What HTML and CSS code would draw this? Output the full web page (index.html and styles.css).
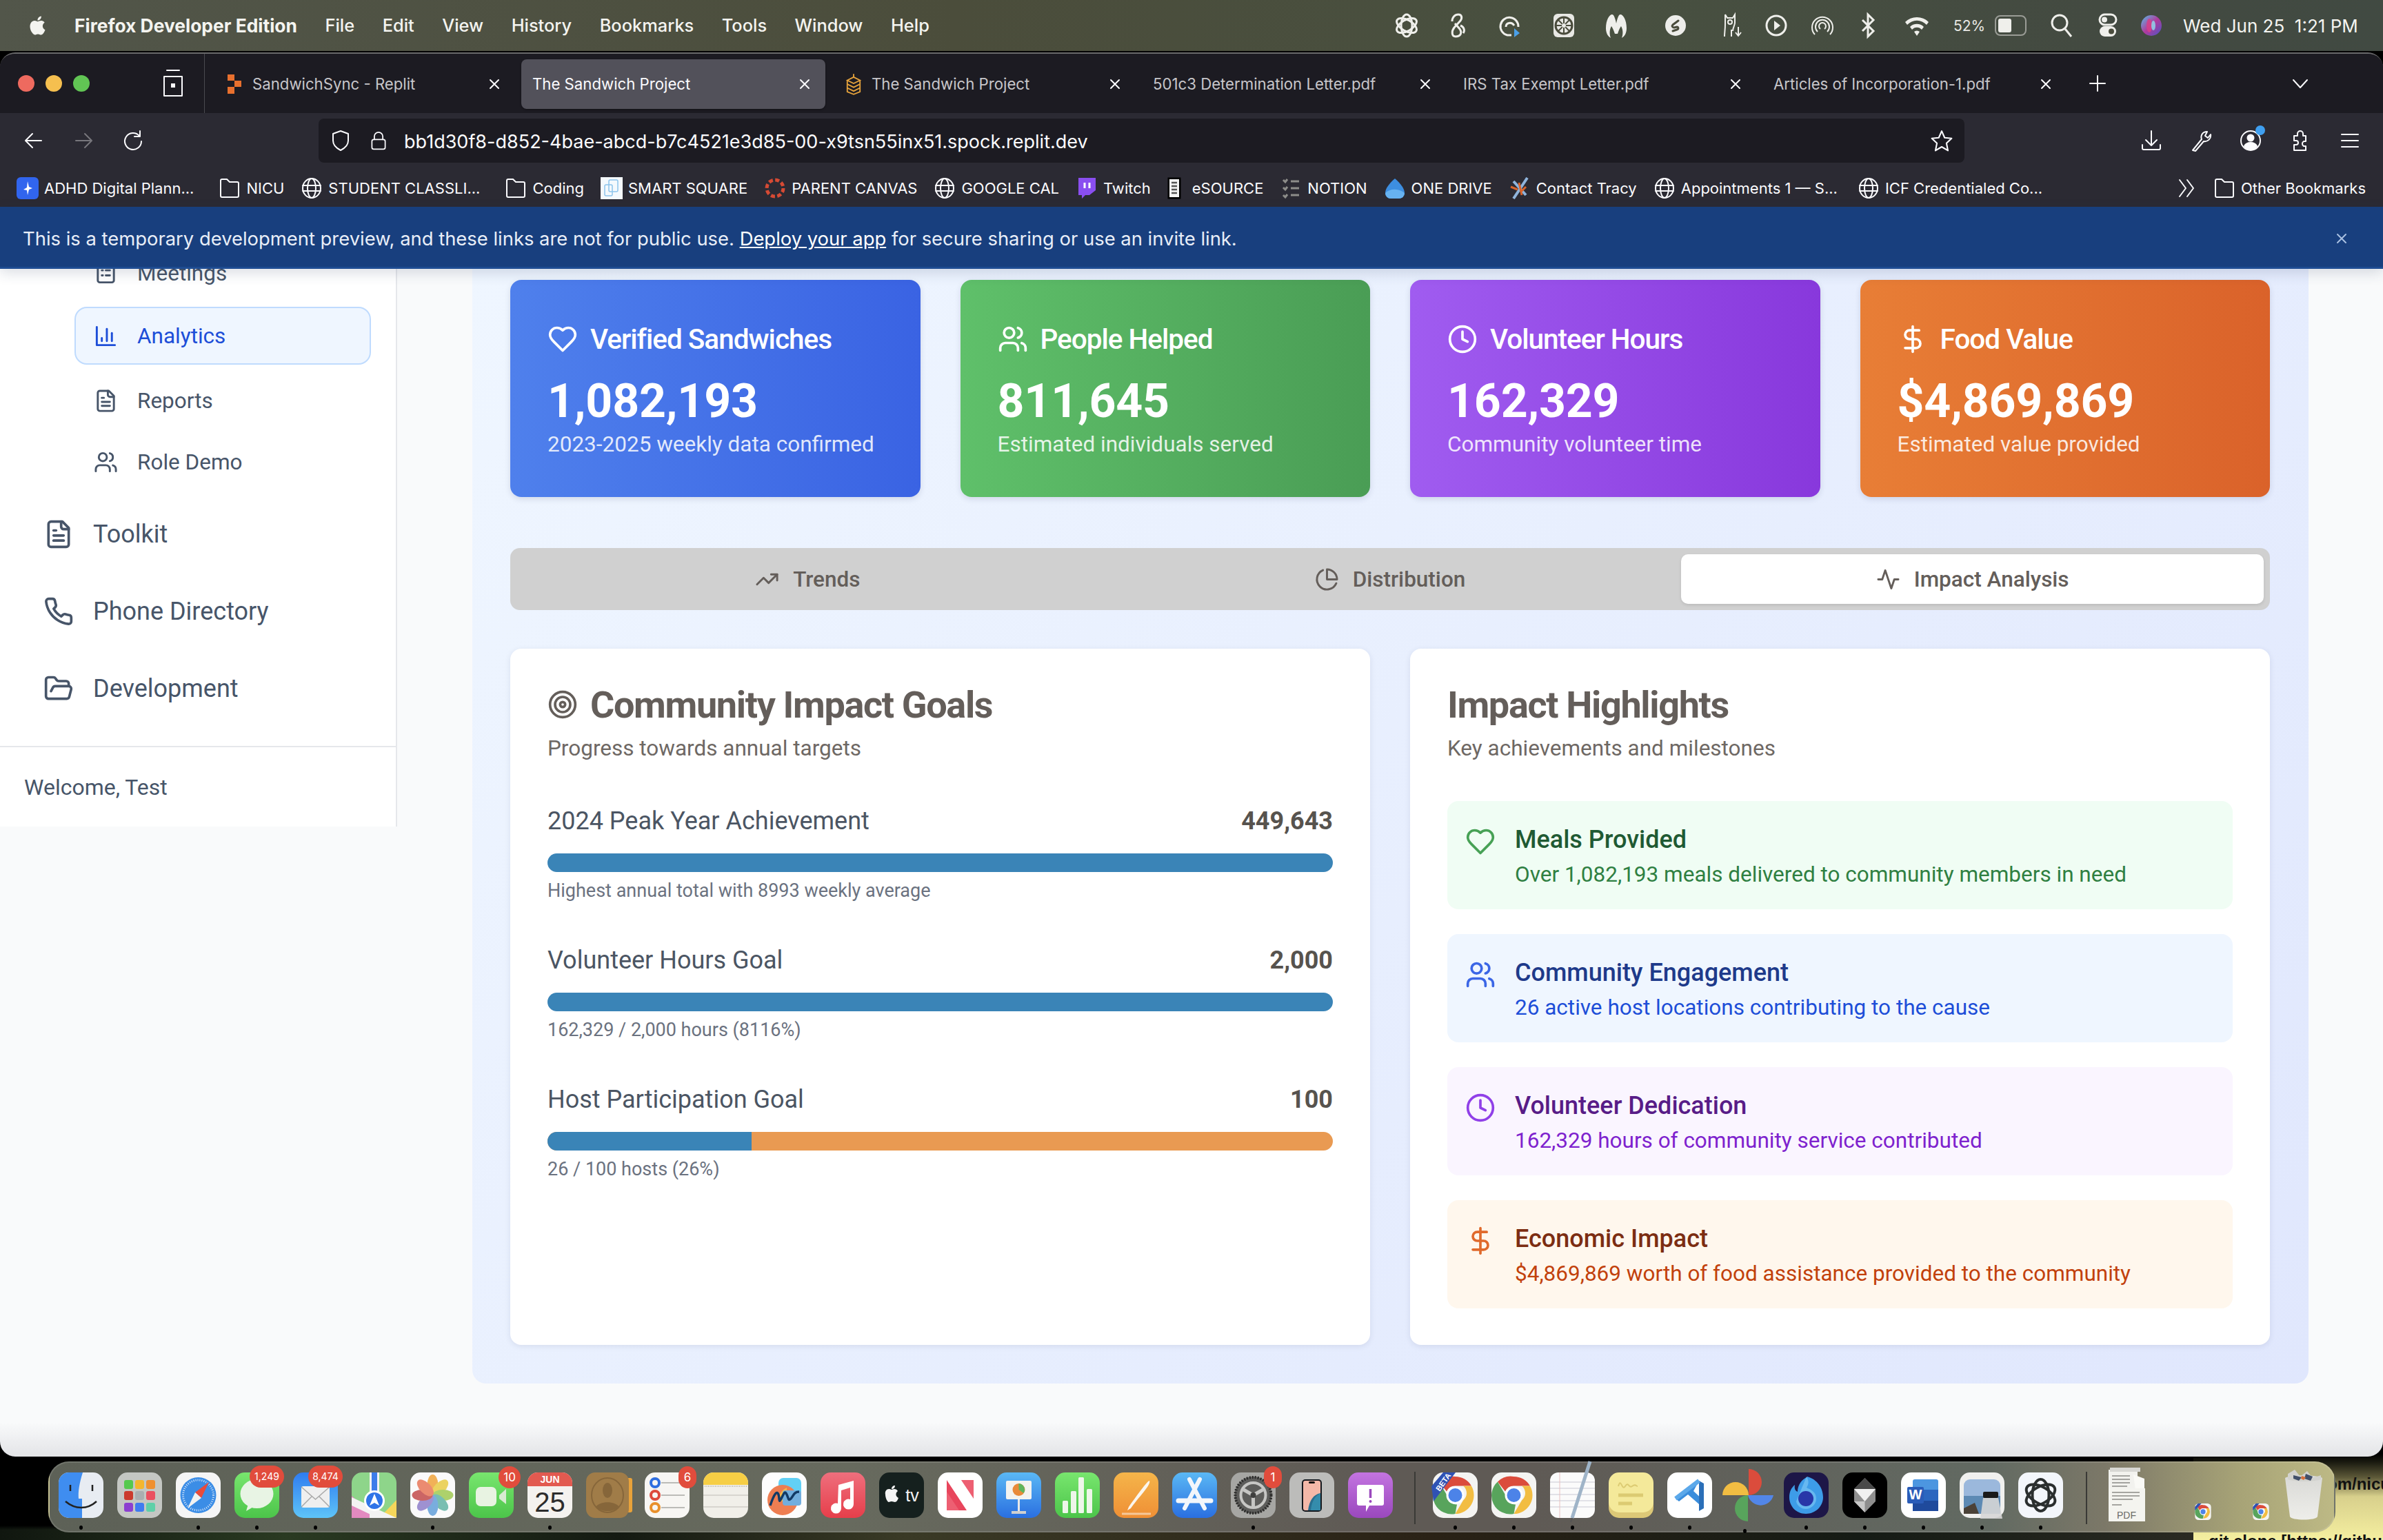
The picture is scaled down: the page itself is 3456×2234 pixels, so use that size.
FILE: index.html
```html
<!DOCTYPE html>
<html lang="en">
<head>
  <meta charset="UTF-8">
  <title>The Sandwich Project</title>
  <link rel="stylesheet" href="styles.css">
</head>
<body>
  <!-- shared icons -->
  <svg class="sprite" aria-hidden="true">
    <defs>
      <linearGradient id="gBlue" x1="0" y1="0" x2="0" y2="1"><stop offset="0" stop-color="#5ab8f5"/><stop offset="1" stop-color="#2a6fe0"/></linearGradient>
      <linearGradient id="gGreen" x1="0" y1="0" x2="0" y2="1"><stop offset="0" stop-color="#78e66e"/><stop offset="1" stop-color="#4cc54a"/></linearGradient>
      <linearGradient id="gOrange" x1="0" y1="0" x2="0" y2="1"><stop offset="0" stop-color="#f5b54a"/><stop offset="1" stop-color="#ef8f35"/></linearGradient>
      <linearGradient id="gRed" x1="0" y1="0" x2="0" y2="1"><stop offset="0" stop-color="#ef6f7d"/><stop offset="1" stop-color="#e63e4a"/></linearGradient>
      <linearGradient id="gPurple" x1="0" y1="0" x2="0" y2="1"><stop offset="0" stop-color="#c374e0"/><stop offset="1" stop-color="#9a48bd"/></linearGradient>
      <linearGradient id="gMail" x1="0" y1="0" x2="0" y2="1"><stop offset="0" stop-color="#2f7cf0"/><stop offset="1" stop-color="#5ec4f8"/></linearGradient>
      <linearGradient id="gSiri" x1="0" y1="0" x2="1" y2="1"><stop offset="0" stop-color="#55c2e8"/><stop offset=".5" stop-color="#b03a9c"/><stop offset="1" stop-color="#4a56c8"/></linearGradient>
      <linearGradient id="gTrash" x1="0" y1="0" x2="0" y2="1"><stop offset="0" stop-color="#d9d9d6"/><stop offset="1" stop-color="#eeeeea"/></linearGradient>
    </defs>
    <symbol id="i-heart" viewBox="0 0 24 24"><path d="M19 14c1.49-1.46 3-3.21 3-5.5A5.5 5.5 0 0 0 16.5 3c-1.76 0-3 .5-4.5 2-1.5-1.5-2.74-2-4.5-2A5.5 5.5 0 0 0 2 8.5c0 2.3 1.5 4.05 3 5.5l7 7Z"/></symbol>
    <symbol id="i-users" viewBox="0 0 24 24"><path d="M16 21v-2a4 4 0 0 0-4-4H6a4 4 0 0 0-4 4v2"/><circle cx="9" cy="7" r="4"/><path d="M22 21v-2a4 4 0 0 0-3-3.87"/><path d="M16 3.13a4 4 0 0 1 0 7.75"/></symbol>
    <symbol id="i-clock" viewBox="0 0 24 24"><circle cx="12" cy="12" r="10"/><path d="M12 6v6l4 2"/></symbol>
    <symbol id="i-dollar" viewBox="0 0 24 24"><path d="M12 2v20"/><path d="M17 5H9.5a3.5 3.5 0 0 0 0 7h5a3.5 3.5 0 0 1 0 7H6"/></symbol>
    <symbol id="i-target" viewBox="0 0 24 24"><circle cx="12" cy="12" r="10"/><circle cx="12" cy="12" r="6"/><circle cx="12" cy="12" r="2"/></symbol>
    <symbol id="i-trend" viewBox="0 0 24 24"><path d="M22 7l-8.5 8.5-5-5L2 17"/><path d="M16 7h6v6"/></symbol>
    <symbol id="i-pie" viewBox="0 0 24 24"><path d="M21.21 15.89A10 10 0 1 1 8 2.83"/><path d="M22 12A10 10 0 0 0 12 2v10z"/></symbol>
    <symbol id="i-activity" viewBox="0 0 24 24"><path d="M22 12h-4l-3 9L9 3l-3 9H2"/></symbol>
    <symbol id="i-bars" viewBox="0 0 24 24"><path d="M3 3v18h18"/><path d="M18 17V9"/><path d="M13 17V5"/><path d="M8 17v-3"/></symbol>
    <symbol id="i-file" viewBox="0 0 24 24"><path d="M15 2H6a2 2 0 0 0-2 2v16a2 2 0 0 0 2 2h12a2 2 0 0 0 2-2V7Z"/><path d="M14 2v4a2 2 0 0 0 2 2h4"/><path d="M10 9H8"/><path d="M16 13H8"/><path d="M16 17H8"/></symbol>
    <symbol id="i-phone" viewBox="0 0 24 24"><path d="M22 16.92v3a2 2 0 0 1-2.18 2 19.79 19.79 0 0 1-8.63-3.07 19.5 19.5 0 0 1-6-6 19.79 19.79 0 0 1-3.07-8.67A2 2 0 0 1 4.11 2h3a2 2 0 0 1 2 1.72 12.84 12.84 0 0 0 .7 2.81 2 2 0 0 1-.45 2.11L8.09 9.91a16 16 0 0 0 6 6l1.27-1.27a2 2 0 0 1 2.11-.45 12.84 12.84 0 0 0 2.81.7A2 2 0 0 1 22 16.92z"/></symbol>
    <symbol id="i-folder-open" viewBox="0 0 24 24"><path d="m6 14 1.5-2.9A2 2 0 0 1 9.24 10H20a2 2 0 0 1 1.94 2.5l-1.54 6a2 2 0 0 1-1.95 1.5H4a2 2 0 0 1-2-2V5a2 2 0 0 1 2-2h3.9a2 2 0 0 1 1.69.9l.81 1.2a2 2 0 0 0 1.69.9H18a2 2 0 0 1 2 2v2"/></symbol>
    <symbol id="i-clipboard" viewBox="0 0 24 24"><rect x="4" y="3" width="16" height="18" rx="2"/><path d="M8 9h1M12 9h4M8 14h1M12 14h4"/></symbol>

    <symbol id="b-x" viewBox="0 0 20 20"><path d="M4 4l12 12M16 4L4 16"/></symbol>
    <symbol id="b-back" viewBox="0 0 32 32"><path d="M27 16H5M14 6L4 16l10 10"/></symbol>
    <symbol id="b-forward" viewBox="0 0 32 32"><path d="M5 16h22M18 6l10 10-10 10"/></symbol>
    <symbol id="b-reload" viewBox="0 0 32 32"><path d="M25 9A12 12 0 1 0 28 17"/><path d="M26 2v8h-8"/></symbol>
    <symbol id="b-shield" viewBox="0 0 32 32"><path d="M16 2l11 4v10c0 7-5 11-11 14C10 27 5 23 5 16V6z"/></symbol>
    <symbol id="b-lock" viewBox="0 0 32 32"><rect x="5" y="14" width="22" height="16" rx="3"/><path d="M9 14V9a7 7 0 0 1 14 0v5"/></symbol>
    <symbol id="b-star" viewBox="0 0 32 32"><path d="M16 3l4 9 9.500 1-7 6.500 2 10L16 24.500 7.500 29.500l2-10-7-6.500L12 12z"/></symbol>
    <symbol id="b-download" viewBox="0 0 32 32"><path d="M16 2v20M8 15l8 8 8-8M3 22v5a2 2 0 0 0 2 2h22a2 2 0 0 0 2-2v-5"/></symbol>
    <symbol id="b-wrench" viewBox="0 0 32 32"><path d="M4 30L17 14c-2-5 1-11 8-11l-3 6 4 3 4-5c1 6-4 11-10 10L8 31z"/></symbol>
    <symbol id="b-account" viewBox="0 0 32 32"><circle cx="16" cy="16" r="14"/><circle cx="16" cy="12" r="4.500" fill="#fbfbfe"/><path d="M7 24c2-4 5-5 9-5s7 1 9 5c-2 3-5 5-9 5s-7-2-9-5z" fill="#fbfbfe"/></symbol>
    <symbol id="b-puzzle" viewBox="0 0 32 32"><path d="M7 9h5V6a4 4 0 0 1 8 0v3h4v8h-3a4 4 0 0 0 0 7h3v6H7v-8h3a3 3 0 0 0 0-6H7z"/></symbol>
    <symbol id="b-menu" viewBox="0 0 32 32"><path d="M4 7h24M4 16h24M4 25h24"/></symbol>
    <symbol id="b-plus" viewBox="0 0 26 26"><path d="M13 2v22M2 13h22"/></symbol>
    <symbol id="b-chevron" viewBox="0 0 26 26"><path d="M3 8l10 11L23 8"/></symbol>
    <symbol id="b-chevrons" viewBox="0 0 28 32"><path d="M3 4l9 12-9 12M14 4l9 12-9 12"/></symbol>
    <symbol id="b-folder" viewBox="0 0 30 32"><path d="M2 5a2 2 0 0 1 2-2h7l4 4h11a2 2 0 0 1 2 2v18a2 2 0 0 1-2 2H4a2 2 0 0 1-2-2z"/></symbol>
    <symbol id="b-globe" viewBox="0 0 30 32"><ellipse cx="15" cy="16" rx="13" ry="14"/><ellipse cx="15" cy="16" rx="6" ry="14"/><path d="M2 12h26M2 20h26"/></symbol>

    <symbol id="a-chrome" viewBox="0 0 65 66"><rect width="65" height="66" rx="15" fill="#f4f4f2"/><path d="M32.500 6a27 27 0 0 1 23.400 13.500H32.500a13.500 13.500 0 0 0-12.500 8L9 13.500A27 27 0 0 1 32.500 6z" fill="#db4c3c"/><path d="M55.900 19.500A27 27 0 0 1 32.500 60L44 40.500a13.500 13.500 0 0 0 0-21z" fill="#f2bd42"/><path d="M32.500 60A27 27 0 0 1 9 13.500L21 34a13.500 13.500 0 0 0 14 12.500z" fill="#58a45c"/><circle cx="32.500" cy="33" r="13" fill="#fff"/><circle cx="32.500" cy="33" r="10" fill="#4c83e8"/></symbol>
  </svg>

  <div class="wallpaper">
    <div class="doc-pane">
      <span class="doc-line-1">om/nicu</span>
      <span class="doc-line-2">git clone [https://github</span>
    </div>
  </div>

  <header class="menubar">
    <svg class="apple" viewBox="0 0 24 24"><path d="M12.152 6.896c-.948 0-2.415-1.078-3.96-1.04-2.04.027-3.91 1.183-4.961 3.014-2.117 3.675-.546 9.103 1.519 12.09 1.013 1.454 2.208 3.09 3.792 3.039 1.52-.065 2.09-.987 3.935-.987 1.831 0 2.35.987 3.96.948 1.637-.026 2.676-1.48 3.676-2.948 1.156-1.688 1.636-3.325 1.662-3.415-.039-.013-3.182-1.221-3.22-4.857-.026-3.04 2.48-4.494 2.597-4.559-1.429-2.09-3.623-2.324-4.39-2.376-2-.156-3.675 1.09-4.61 1.09zM15.53 3.83c.843-1.012 1.4-2.427 1.245-3.83-1.207.052-2.662.805-3.532 1.818-.78.896-1.454 2.338-1.273 3.714 1.338.104 2.715-.688 3.559-1.701"/></svg>
    <nav class="menus">
      <span class="menu-app">Firefox Developer Edition</span>
      <span>File</span><span>Edit</span><span>View</span><span>History</span><span>Bookmarks</span><span>Tools</span><span>Window</span><span>Help</span>
    </nav>
    <div class="status">
      <svg viewBox="0 0 40 40" class="st-line"><g transform="translate(20 20)"><ellipse rx="8" ry="16"/><ellipse rx="8" ry="16" transform="rotate(60)"/><ellipse rx="8" ry="16" transform="rotate(120)"/></g></svg>
      <svg viewBox="0 0 40 40" class="st-line"><path d="M14 14c0-6 4-10 9-10s6 5 3 9l-9 10c-4 5-4 13 2 13 7 0 10-5 6-11l-7-8M26 20c5 2 7 7 4 11"/></svg>
      <svg viewBox="0 0 40 40" class="st-line"><path d="M32 22a13 13 0 1 0-16 12h6"/><path d="M14 22c0-6 8-8 12-2"/><path class="st-blue" d="M26 24l8 7-8 6z"/></svg>
      <svg viewBox="0 0 40 40"><rect x="5" y="3" width="30" height="34" rx="6" fill="#e8e8e4"/><circle cx="20" cy="20" r="12" fill="none" stroke="#4a4c3c" stroke-width="3"/><path d="M20 8v24M8 20h24M12 12l16 16M28 12L12 28" stroke="#4a4c3c" stroke-width="2"/><circle cx="20" cy="20" r="3" fill="#e8e8e4"/></svg>
      <svg viewBox="0 0 40 40" class="st-fill"><path d="M5 24C5 12 10 4 14 4c3 0 5 8 6 13 1-5 3-13 6-13 4 0 9 8 9 20 0 7-3 12-7 14 2-5 2-12-1-17-2 3-3 5-5 11h-4c-2-6-3-8-5-11-3 5-3 12-1 17-4-2-7-7-7-14z"/></svg>
      <svg viewBox="0 0 40 40"><circle cx="20" cy="20" r="15" fill="#ededea"/><path d="M24 13l-8 6c-2 2 0 4 2 4l4-1c2 0 3 3 0 4l-6 2" fill="none" stroke="#4a4c3c" stroke-width="3" stroke-linecap="round"/></svg>
      <svg viewBox="0 0 40 40" class="st-line thin"><path d="M10 4l3 5h8l3-5v12c0 4-3 7-3 12M10 4v14c0 8-1 12-1 18M19 26v10"/><circle cx="17" cy="15" r="3"/><path d="M29 22v13M25 30l4 5 4-5"/></svg>
      <svg viewBox="0 0 40 40" class="st-line"><circle cx="20" cy="20" r="14"/><path class="st-solid" d="M17 13l9 7-9 7z"/></svg>
      <svg viewBox="0 0 40 40" class="st-line thin"><path d="M9 33a15 15 0 1 1 22 0M13 29a10 10 0 1 1 14 0M17 25a5 5 0 1 1 6 0"/></svg>
      <svg viewBox="0 0 40 40" class="st-line"><path d="M12 12l16 16-8 8V4l8 8-16 16"/></svg>
      <svg viewBox="0 0 40 40" class="st-fill"><path d="M3 15a24 24 0 0 1 34 0l-3 4a19 19 0 0 0-28 0zM10 22a14 14 0 0 1 20 0l-3 4a9 9 0 0 0-14 0zM16 29a6 6 0 0 1 8 0l-4 6z"/></svg>
      <span class="st-text">52%</span>
      <span class="battery"><span class="battery-level"></span></span>
      <svg viewBox="0 0 40 40" class="st-line"><circle cx="17" cy="16" r="11"/><path d="M25 25l9 11"/></svg>
      <svg viewBox="0 0 40 40"><rect x="8" y="4" width="24" height="15" rx="7.500" fill="none" stroke="#efefeb" stroke-width="3"/><circle cx="15" cy="11.500" r="4" fill="#efefeb"/><rect x="8" y="21" width="24" height="15" rx="7.500" fill="#efefeb"/><circle cx="25" cy="28.500" r="4" fill="#4a4c3c"/></svg>
      <svg viewBox="0 0 40 40"><circle cx="20" cy="20" r="15" fill="url(#gSiri)"/><ellipse cx="17" cy="20" rx="4" ry="10" fill="#d6408a" opacity=".9"/><ellipse cx="23" cy="20" rx="3" ry="7" fill="#8fe0f0" opacity=".8"/></svg>
      <span class="st-clock">Wed Jun 25&nbsp; 1:21 PM</span>
    </div>
  </header>

  <div class="window">
    <div class="tabstrip">
      <div class="tab-controls">
        <span class="light light-red"></span><span class="light light-yellow"></span><span class="light light-green"></span>
        <svg class="line-icon firefox-view" viewBox="0 0 32 44"><path d="M7 3h18M3 12h26v28H3z"/><rect x="13" y="22" width="6" height="6" fill="#fbfbfe" stroke="none"/></svg>
      </div>
      <div class="tab tab-fav">
        <svg class="favicon" viewBox="0 0 24 32"><path d="M2 2h10v9H2zM12 11h10v9H12zM2 20h10v10H2z" fill="#e8702e"/></svg>
        <span>SandwichSync - Replit</span>
        <svg class="line-icon tab-x"><use href="#b-x"/></svg>
      </div>
      <div class="tab tab-active">
        <span>The Sandwich Project</span>
        <svg class="line-icon tab-x"><use href="#b-x"/></svg>
      </div>
      <div class="tab tab-fav tab-fav-b">
        <svg class="favicon" viewBox="0 0 26 34"><g fill="none" stroke="#e5a23c" stroke-width="2"><path d="M13 1v6"/><path d="M3 11l10-5 10 5-10 5zM3 17l10 5 10-5M3 23l10 5 10-5M3 11v18l10 4 10-4V11"/></g></svg>
        <span>The Sandwich Project</span>
        <svg class="line-icon tab-x"><use href="#b-x"/></svg>
      </div>
      <div class="tab"><span>501c3 Determination Letter.pdf</span><svg class="line-icon tab-x"><use href="#b-x"/></svg></div>
      <div class="tab"><span>IRS Tax Exempt Letter.pdf</span><svg class="line-icon tab-x"><use href="#b-x"/></svg></div>
      <div class="tab"><span>Articles of Incorporation-1.pdf</span><svg class="line-icon tab-x"><use href="#b-x"/></svg></div>
      <svg class="line-icon tab-plus"><use href="#b-plus"/></svg>
      <svg class="line-icon tab-chevron"><use href="#b-chevron"/></svg>
    </div>

    <div class="navbar">
      <svg class="line-icon nav-btn"><use href="#b-back"/></svg>
      <svg class="line-icon nav-btn nav-dim"><use href="#b-forward"/></svg>
      <svg class="line-icon nav-btn"><use href="#b-reload"/></svg>
      <div class="urlbar">
        <svg class="line-icon url-shield"><use href="#b-shield"/></svg>
        <svg class="line-icon url-lock"><use href="#b-lock"/></svg>
        <span class="url-text">bb1d30f8-d852-4bae-abcd-b7c4521e3d85-00-x9tsn55inx51.spock.replit.dev</span>
        <svg class="line-icon url-star"><use href="#b-star"/></svg>
      </div>
      <div class="nav-tools">
        <svg class="line-icon nav-btn"><use href="#b-download"/></svg>
        <svg class="line-icon nav-btn"><use href="#b-wrench"/></svg>
        <span class="account"><svg class="line-icon nav-btn"><use href="#b-account"/></svg><span class="account-dot"></span></span>
        <svg class="line-icon nav-btn"><use href="#b-puzzle"/></svg>
        <svg class="line-icon nav-btn"><use href="#b-menu"/></svg>
      </div>
    </div>

    <div class="bookmarks">
      <span class="bm bm-trunc"><svg class="bm-icon" viewBox="0 0 32 32"><rect width="32" height="32" rx="6" fill="#3165ee"/><path d="M16 6l2 8 5 2-5 2-2 8-1-7-5-1 5-3z" fill="#fff"/></svg>ADHD Digital Plann...</span>
      <span class="bm"><svg class="line-icon bm-icon"><use href="#b-folder"/></svg>NICU</span>
      <span class="bm bm-trunc"><svg class="line-icon bm-icon"><use href="#b-globe"/></svg>STUDENT CLASSLI...</span>
      <span class="bm"><svg class="line-icon bm-icon"><use href="#b-folder"/></svg>Coding</span>
      <span class="bm"><svg class="bm-icon" viewBox="0 0 32 32"><rect width="32" height="32" fill="#f4f9fd"/><g fill="none" stroke="#8cc4ec" stroke-width="1.500"><rect x="12" y="4" width="13" height="17" rx="2"/><rect x="6" y="11" width="11" height="16" rx="2"/></g></svg>SMART SQUARE</span>
      <span class="bm"><svg class="bm-icon" viewBox="0 0 32 32"><circle cx="16" cy="16" r="12" fill="none" stroke="#d64a34" stroke-width="5" stroke-dasharray="6 3.400"/></svg>PARENT CANVAS</span>
      <span class="bm"><svg class="line-icon bm-icon"><use href="#b-globe"/></svg>GOOGLE CAL</span>
      <span class="bm"><svg class="bm-icon" viewBox="0 0 28 32"><path d="M2 1h25v18l-9 7h-6l-5 5v-5H2z" fill="#8a4ef0"/><path d="M11 8v8M18 8v8" stroke="#fff" stroke-width="3"/></svg>Twitch</span>
      <span class="bm"><svg class="bm-icon bm-slim" viewBox="0 0 20 32"><rect x="1" y="1" width="18" height="30" fill="#000" stroke="#000"/><rect x="3" y="3" width="14" height="26" fill="#f4f4f4"/><path d="M6 8h8M6 13h8M6 18h8M6 23h8" stroke="#555" stroke-width="2.500"/></svg>eSOURCE</span>
      <span class="bm"><svg class="bm-icon" viewBox="0 0 28 32"><path d="M3 4l3 3 3-4M3 15l3 3 3-4M3 26l3 3 3-4M14 6h12M14 16h12M14 26h12" fill="none" stroke="#8d8d8a" stroke-width="3"/></svg>NOTION</span>
      <span class="bm"><svg class="bm-icon" viewBox="0 0 32 32"><path d="M16 2c7 6 14 14 14 21a8 8 0 0 1-8 8H10a8 8 0 0 1-8-8C2 16 9 8 16 2z" fill="#3d8ee0"/><path d="M2 23c6-6 18-8 28 0a8 8 0 0 1-8 8H10a8 8 0 0 1-8-8z" fill="#67b2f0"/></svg>ONE DRIVE</span>
      <span class="bm"><svg class="bm-icon" viewBox="0 0 30 32"><path d="M26 1L6 31M6 6l18 20" stroke="#8fb4dc" stroke-width="4"/><path d="M2 14l10 4M14 8l4 18M24 14l-8 8" stroke="#d8642c" stroke-width="3"/></svg>Contact Tracy</span>
      <span class="bm bm-trunc-s"><svg class="line-icon bm-icon"><use href="#b-globe"/></svg>Appointments 1 — S...</span>
      <span class="bm"><svg class="line-icon bm-icon"><use href="#b-globe"/></svg>ICF Credentialed Co...</span>
      <svg class="line-icon bm-more"><use href="#b-chevrons"/></svg>
      <span class="bm bm-other"><svg class="line-icon bm-icon"><use href="#b-folder"/></svg>Other Bookmarks</span>
    </div>

    <div class="banner">
      <p>This is a temporary development preview, and these links are not for public use. <a href="#">Deploy your app</a> for secure sharing or use an invite link.</p>
      <svg class="line-icon banner-x"><use href="#b-x"/></svg>
    </div>

    <div class="content">
      <aside class="sidebar">
        <ul class="subnav">
          <li><svg class="line-icon nav-icon"><use href="#i-clipboard"/></svg>Meetings</li>
          <li class="active"><svg class="line-icon nav-icon"><use href="#i-bars"/></svg>Analytics</li>
          <li><svg class="line-icon nav-icon"><use href="#i-file"/></svg>Reports</li>
          <li><svg class="line-icon nav-icon"><use href="#i-users"/></svg>Role Demo</li>
        </ul>
        <ul class="mainnav">
          <li><svg class="line-icon nav-icon-lg"><use href="#i-file"/></svg>Toolkit</li>
          <li><svg class="line-icon nav-icon-lg"><use href="#i-phone"/></svg>Phone Directory</li>
          <li><svg class="line-icon nav-icon-lg"><use href="#i-folder-open"/></svg>Development</li>
        </ul>
        <div class="welcome">Welcome, Test</div>
      </aside>

      <main class="panel">
        <section class="stats">
          <div class="stat stat-blue">
            <h3><svg class="line-icon stat-icon"><use href="#i-heart"/></svg>Verified Sandwiches</h3>
            <div class="stat-num">1,082,193</div>
            <p>2023-2025 weekly data confirmed</p>
          </div>
          <div class="stat stat-green">
            <h3><svg class="line-icon stat-icon"><use href="#i-users"/></svg>People Helped</h3>
            <div class="stat-num">811,645</div>
            <p>Estimated individuals served</p>
          </div>
          <div class="stat stat-purple">
            <h3><svg class="line-icon stat-icon"><use href="#i-clock"/></svg>Volunteer Hours</h3>
            <div class="stat-num">162,329</div>
            <p>Community volunteer time</p>
          </div>
          <div class="stat stat-orange">
            <h3><svg class="line-icon stat-icon"><use href="#i-dollar"/></svg>Food Value</h3>
            <div class="stat-num">$4,869,869</div>
            <p>Estimated value provided</p>
          </div>
        </section>

        <div class="tabs">
          <button class="tabs-btn"><svg class="line-icon tabs-icon"><use href="#i-trend"/></svg>Trends</button>
          <button class="tabs-btn"><svg class="line-icon tabs-icon"><use href="#i-pie"/></svg>Distribution</button>
          <button class="tabs-btn tabs-on"><svg class="line-icon tabs-icon"><use href="#i-activity"/></svg>Impact Analysis</button>
        </div>

        <section class="columns">
          <div class="card">
            <h2><svg class="line-icon stat-icon"><use href="#i-target"/></svg>Community Impact Goals</h2>
            <p class="card-sub">Progress towards annual targets</p>
            <div class="goals">
              <div class="goal">
                <div class="goal-head"><span>2024 Peak Year Achievement</span><b>449,643</b></div>
                <div class="bar"><div class="bar-fill" style="width:100%"></div></div>
                <small>Highest annual total with 8993 weekly average</small>
              </div>
              <div class="goal">
                <div class="goal-head"><span>Volunteer Hours Goal</span><b>2,000</b></div>
                <div class="bar"><div class="bar-fill" style="width:100%"></div></div>
                <small>162,329 / 2,000 hours (8116%)</small>
              </div>
              <div class="goal">
                <div class="goal-head"><span>Host Participation Goal</span><b>100</b></div>
                <div class="bar"><div class="bar-fill" style="width:26%"></div></div>
                <small>26 / 100 hosts (26%)</small>
              </div>
            </div>
          </div>

          <div class="card">
            <h2>Impact Highlights</h2>
            <p class="card-sub">Key achievements and milestones</p>
            <div class="highlights">
              <div class="hl hl-green">
                <svg class="line-icon hl-icon"><use href="#i-heart"/></svg>
                <div><h4>Meals Provided</h4><p>Over 1,082,193 meals delivered to community members in need</p></div>
              </div>
              <div class="hl hl-blue">
                <svg class="line-icon hl-icon"><use href="#i-users"/></svg>
                <div><h4>Community Engagement</h4><p>26 active host locations contributing to the cause</p></div>
              </div>
              <div class="hl hl-purple">
                <svg class="line-icon hl-icon"><use href="#i-clock"/></svg>
                <div><h4>Volunteer Dedication</h4><p>162,329 hours of community service contributed</p></div>
              </div>
              <div class="hl hl-orange">
                <svg class="line-icon hl-icon"><use href="#i-dollar"/></svg>
                <div><h4>Economic Impact</h4><p>$4,869,869 worth of food assistance provided to the community</p></div>
              </div>
            </div>
          </div>
        </section>
      </main>
    </div>
  </div>

  <footer class="dock">
    <div class="app run"><svg viewBox="0 0 65 66"><rect width="65" height="66" rx="15" fill="#e8ecf2"/><path d="M15 0h20c-5 16-7 28-6 38h5v28H15A15 15 0 0 1 0 51V15A15 15 0 0 1 15 0z" fill="#3f8df0"/><path d="M17 18v9M49 18v9" stroke="#222" stroke-width="2.500"/><path d="M10 42c14 12 32 12 45 0" fill="none" stroke="#222" stroke-width="2.500"/></svg></div>
    <div class="app"><svg viewBox="0 0 65 66"><rect width="65" height="66" rx="15" fill="#c4c7c3"/><g><rect x="10" y="11" width="13" height="13" rx="3" fill="#55c94e"/><rect x="26" y="11" width="13" height="13" rx="3" fill="#f4b62e"/><rect x="42" y="11" width="13" height="13" rx="3" fill="#ef9030"/><rect x="10" y="27" width="13" height="13" rx="3" fill="#cb3a2c"/><rect x="26" y="27" width="13" height="13" rx="3" fill="#a9aeb0"/><rect x="42" y="27" width="13" height="13" rx="3" fill="#ea5060"/><rect x="10" y="44" width="13" height="13" rx="3" fill="#8c3fd0"/><rect x="26" y="44" width="13" height="13" rx="3" fill="#3f7cf0"/><rect x="42" y="44" width="13" height="13" rx="3" fill="#5fd0a8"/></g></svg></div>
    <div class="app run"><svg viewBox="0 0 65 66"><rect width="65" height="66" rx="15" fill="#f5f5f5"/><circle cx="32.500" cy="33" r="26" fill="#3b8de6"/><circle cx="32.500" cy="33" r="22" fill="none" stroke="#dbe9fa" stroke-width="3" stroke-dasharray="1 2"/><path d="M48 14L28 29l9 8z" fill="#e84b3c"/><path d="M17 52l20-15-9-8z" fill="#f2f2f2"/></svg></div>
    <div class="app run"><svg viewBox="0 0 65 66"><rect width="65" height="66" rx="15" fill="url(#gGreen)"/><ellipse cx="32.500" cy="31" rx="24" ry="21" fill="#e8f4e4"/><path d="M20 46l-3 10 12-7z" fill="#e8f4e4"/></svg><span class="badge badge-wide">1,249</span></div>
    <div class="app run"><svg viewBox="0 0 65 66"><rect width="65" height="66" rx="15" fill="url(#gMail)"/><rect x="12" y="20" width="41" height="31" rx="3" fill="#efefef"/><path d="M12 21l20.500 18L53 21M12 50l15-15M53 50L38 35" fill="none" stroke="#a9a9a9" stroke-width="1.500"/></svg><span class="badge badge-wide">8,474</span></div>
    <div class="app"><svg viewBox="0 0 65 66"><rect width="65" height="66" rx="15" fill="#8ed58a"/><path d="M0 34L38 66H0z" fill="#e38ac0"/><path d="M40 66L65 40v26z" fill="#f5d65a"/><path d="M26 0h14v66H26z" fill="#f3f3f3"/><path d="M29 0h8v28h-8z" fill="#3e7cea"/><path d="M0 36l65 30H38L0 48z" fill="#f3f3f3"/><circle cx="33" cy="41" r="15" fill="#fff"/><circle cx="33" cy="41" r="12" fill="#2f74e8"/><path d="M33 31l7 17-7-4-7 4z" fill="#fff"/></svg></div>
    <div class="app run"><svg viewBox="0 0 65 66"><rect width="65" height="66" rx="15" fill="#fafafa"/><g transform="translate(32.500 33)" opacity=".8"><ellipse cy="-15" rx="8" ry="15" fill="#f0a030"/><ellipse cy="-15" rx="8" ry="15" fill="#e8c93a" transform="rotate(45)"/><ellipse cy="-15" rx="8" ry="15" fill="#9ac848" transform="rotate(90)"/><ellipse cy="-15" rx="8" ry="15" fill="#59b0a0" transform="rotate(135)"/><ellipse cy="-15" rx="8" ry="15" fill="#5a9ad8" transform="rotate(180)"/><ellipse cy="-15" rx="8" ry="15" fill="#8878c8" transform="rotate(225)"/><ellipse cy="-15" rx="8" ry="15" fill="#c04040" transform="rotate(270)"/><ellipse cy="-15" rx="8" ry="15" fill="#e87050" transform="rotate(315)"/></g></svg></div>
    <div class="app"><svg viewBox="0 0 65 66"><rect width="65" height="66" rx="15" fill="url(#gGreen)"/><rect x="10" y="21" width="30" height="28" rx="7" fill="#e8f3e2"/><path d="M44 33l10-9v22l-10-8z" fill="#d8ead2"/></svg><span class="badge">10</span></div>
    <div class="app run"><svg viewBox="0 0 65 66"><rect width="65" height="66" rx="15" fill="#f4f2ef"/><path d="M0 20V15A15 15 0 0 1 15 0h35a15 15 0 0 1 15 15v5z" fill="#e25a50"/><text x="32.500" y="15" class="cal-mon">JUN</text><text x="32.500" y="57" class="cal-day">25</text></svg></div>
    <div class="app"><svg viewBox="0 0 65 66"><rect x="58" y="8" width="9" height="50" rx="3" fill="#e8a23a"/><rect width="62" height="66" rx="13" fill="#a07c48"/><ellipse cx="31" cy="33" rx="23" ry="25" fill="none" stroke="#86663a" stroke-width="2"/><ellipse cx="31" cy="26" rx="7" ry="11" fill="#86663a"/><path d="M14 50c6-9 28-9 34 0-8 8-26 8-34 0z" fill="#86663a"/></svg></div>
    <div class="app"><svg viewBox="0 0 65 66"><rect width="65" height="66" rx="15" fill="#f7f6f3"/><circle cx="15" cy="15" r="6" fill="none" stroke="#2f6fe0" stroke-width="4"/><circle cx="15" cy="33" r="6" fill="none" stroke="#dd4a3c" stroke-width="4"/><circle cx="15" cy="51" r="6" fill="none" stroke="#e8902c" stroke-width="4"/><path d="M24 15h34M24 33h34M24 51h34" stroke="#bcbcb8" stroke-width="2"/></svg><span class="badge">6</span></div>
    <div class="app"><svg viewBox="0 0 65 66"><rect width="65" height="66" rx="15" fill="#f1efe9"/><path d="M0 18V15A15 15 0 0 1 15 0h35a15 15 0 0 1 15 15v3z" fill="#f6ce45"/><path d="M0 33h65M0 50h65" stroke="#cfcdc6" stroke-width="1.500"/><path d="M2 20h61" stroke="#b9b6ad" stroke-width="2" stroke-dasharray="1 1.500"/></svg></div>
    <div class="app"><svg viewBox="0 0 65 66"><rect width="65" height="66" rx="15" fill="#fdfdfd"/><rect x="24" y="8" width="33" height="36" rx="7" fill="#62d0f5"/><circle cx="30" cy="40" r="22" fill="#ee7e52"/><path d="M24 38a22 22 0 0 1 12-16v20H24z" fill="#f3b94a"/><rect x="30" y="26" width="27" height="22" rx="4" fill="#72aede"/><path d="M12 48c6-18 10-22 12-16s0 14 4 6 5-12 8-6 2 10 6 6 4-10 12-10" fill="none" stroke="#123a66" stroke-width="3.500"/></svg></div>
    <div class="app"><svg viewBox="0 0 65 66"><rect width="65" height="66" rx="15" fill="url(#gRed)"/><path d="M26 18l22-6v34a7.500 7.500 0 1 1-5-7V22l-13 4v26a7.500 7.500 0 1 1-5-7z" fill="#fff"/></svg></div>
    <div class="app"><svg viewBox="0 0 65 66"><rect width="65" height="66" rx="15" fill="#15201e"/><path d="M19 32c-1-5 2-8 5-8s3 1 4 1 2-1 4-1 4 1 5 3c-4 3-3 8 1 10-1 3-3 6-5 6s-3-1-5-1-3 1-4 1c-2 0-5-6-5-11zM28 24c0-3 2-5 5-5 0 3-2 5-5 5z" fill="#f4f4f4" transform="translate(-10 0)"/><text x="48" y="42" class="tv-label">tv</text></svg></div>
    <div class="app"><svg viewBox="0 0 65 66"><rect width="65" height="66" rx="15" fill="#fff"/><rect x="13" y="11" width="39" height="44" fill="#e8455c"/><path d="M13 11h10l29 44H42zM13 28l18 27H13zM34 11h18v27z" fill="#ed5f72"/><path d="M23 11h11l18 27v17H42L13 11z" fill="#fff"/></svg></div>
    <div class="app"><svg viewBox="0 0 65 66"><rect width="65" height="66" rx="15" fill="url(#gBlue)"/><rect x="14" y="12" width="37" height="27" rx="2" fill="#f3f3f0"/><circle cx="32.500" cy="25" r="9" fill="#e88a3a"/><path d="M32.500 16v9l7 5a9 9 0 0 0-7-14z" fill="#5eb55e"/><path d="M32.500 39v18" stroke="#e8e8e8" stroke-width="3"/><path d="M22 58h21" stroke="#d0d0d0" stroke-width="4"/></svg></div>
    <div class="app"><svg viewBox="0 0 65 66"><rect width="65" height="66" rx="15" fill="url(#gGreen)"/><g fill="#eef6ea"><rect x="11" y="41" width="8" height="18" rx="1.500"/><rect x="23" y="27" width="8" height="32" rx="1.500"/><rect x="34" y="7" width="8" height="52" rx="1.500"/><rect x="46" y="24" width="8" height="35" rx="1.500"/></g></svg></div>
    <div class="app"><svg viewBox="0 0 65 66"><rect width="65" height="66" rx="15" fill="url(#gOrange)"/><path d="M52 12c-3 0-20 24-30 38l-2 5 5-3C36 36 55 18 52 12z" fill="#fbf6ee"/><path d="M12 60h42" stroke="#f5c89a" stroke-width="3"/></svg></div>
    <div class="app"><svg viewBox="0 0 65 66"><rect width="65" height="66" rx="15" fill="url(#gBlue)"/><path d="M25 10l22 42M40 10L18 52" stroke="#f2f6fb" stroke-width="6" stroke-linecap="round"/><path d="M9 41h47" stroke="#f2f6fb" stroke-width="7" stroke-linecap="round"/></svg></div>
    <div class="app run"><svg viewBox="0 0 65 66"><rect width="65" height="66" rx="15" fill="#a6a6a3"/><circle cx="32.500" cy="33" r="27" fill="#5d5d5b"/><circle cx="32.500" cy="33" r="26" fill="none" stroke="#2b2b2a" stroke-width="4" stroke-dasharray="2 2"/><circle cx="32.500" cy="33" r="18" fill="none" stroke="#c6c6c4" stroke-width="4"/><path d="M32.500 33l-14-8M32.500 33l14-8M32.500 33v17" stroke="#c6c6c4" stroke-width="5"/><circle cx="32.500" cy="33" r="4" fill="#3f3f3e"/></svg><span class="badge badge-small">1</span></div>
    <div class="app"><svg viewBox="0 0 65 66"><rect width="65" height="66" rx="15" fill="#bcbcba"/><rect x="18" y="10" width="29" height="47" rx="5" fill="#14181e"/><rect x="20" y="12" width="25" height="43" rx="3" fill="#f4b8a8"/><path d="M45 30c-10 2-16 10-18 25h18z" fill="#296f90"/><path d="M42 32c-6 4-10 12-11 23h14V30z" fill="#3ca0c0" opacity=".6"/><rect x="28" y="13" width="9" height="3" rx="1.500" fill="#111"/></svg></div>
    <div class="app"><svg viewBox="0 0 65 66"><rect width="65" height="66" rx="15" fill="url(#gPurple)"/><path d="M16 18h33a3 3 0 0 1 3 3v24a3 3 0 0 1-3 3H31l-5 9v-9H16a3 3 0 0 1-3-3V21a3 3 0 0 1 3-3z" fill="#fff"/><path d="M32.500 24v13" stroke="#9a48bd" stroke-width="3.500"/><circle cx="32.500" cy="42" r="2" fill="#9a48bd"/></svg></div>
    <div class="dock-sep sep-a"></div>
    <div class="app run"><svg viewBox="0 0 65 66"><use href="#a-chrome"/><path d="M3 42L35 0h-18L0 20z" fill="#2f52b4" transform="translate(-2 0)"/><text x="0" y="0" class="beta" transform="translate(10 28) rotate(-55)">BETA</text></svg></div>
    <div class="app run"><svg viewBox="0 0 65 66"><use href="#a-chrome"/></svg></div>
    <div class="app run"><svg viewBox="0 0 65 66"><rect width="65" height="66" rx="12" fill="#fbfbfb"/><path d="M0 14h65M0 23h65M0 32h65M0 41h65M0 50h65" stroke="#c9c9d4" stroke-width="1"/><path d="M14 0v66" stroke="#e8c0c0"/><path d="M58-16L32 66" stroke="#9fb4c8" stroke-width="5"/><path d="M32 66l-2 6" stroke="#555" stroke-width="2"/></svg></div>
    <div class="app run"><svg viewBox="0 0 65 66"><rect y="6" width="65" height="60" rx="15" fill="#dcc877"/><rect width="65" height="58" rx="15" fill="#f4e99a"/><path d="M14 20c4-14 5 8 10 0s5 4 10 0 6 0 8 0" fill="none" stroke="#dccb72" stroke-width="2"/><path d="M14 33h36M14 45h20" stroke="#dccb72" stroke-width="5"/></svg></div>
    <div class="app run"><svg viewBox="0 0 65 66"><rect width="65" height="66" rx="15" fill="#fff"/><path d="M46 12L12 38l5 4 13-10 16 14 7-5-15-14z" fill="#3a8ddc"/><path d="M46 12v44l7-4V16z" fill="#2b6fb8"/><path d="M12 38l34-26" stroke="#5ba8ea" stroke-width="6"/></svg></div>
    <div class="app run app-photos"><svg viewBox="0 0 74 76"><path d="M38 38V0a19 19 0 0 1 0 38z" fill="#db4c3c"/><path d="M38 38H0a19 19 0 0 1 38 0z" fill="#f2bd42"/><path d="M37 38v38a19 19 0 0 1 0-38z" fill="#58a45c"/><path d="M37 38h37a19 19 0 0 1-37 0z" fill="#5286e8"/></svg></div>
    <div class="app run"><svg viewBox="0 0 65 66"><rect width="65" height="66" rx="15" fill="#1d1647"/><path d="M33 6c12 2 24 14 24 30 0 13-11 24-25 24S8 49 8 36c0-8 3-14 8-18-1 6 1 9 4 10 0-10 6-18 15-22z" fill="#3d9ce8"/><path d="M33 6c3 5 4 10 0 16 6 3 14 6 14 16 0 8-7 15-15 15-7 0-13-5-14-11" fill="#84ccf5" opacity=".6"/><circle cx="32" cy="38" r="11" fill="#2836a8"/></svg></div>
    <div class="app run"><svg viewBox="0 0 65 66"><rect width="65" height="66" rx="15" fill="#000"/><path d="M32.500 8L17 24v18l15.500 16L48 42V24z" fill="#8e8e8e"/><path d="M32.500 8L17 24h31z" fill="#4a4a4a"/><path d="M17 24h31L32.500 42z" fill="#f0f0f0"/><path d="M32.500 42L17 42v0l15.500 16z" fill="#c8c8c8"/></svg></div>
    <div class="app run"><svg viewBox="0 0 65 66"><rect width="65" height="66" rx="15" fill="#fff"/><rect x="17" y="10" width="37" height="46" rx="3" fill="#4c96e0"/><rect x="17" y="25" width="37" height="16" fill="#2c66bf"/><rect x="17" y="41" width="37" height="15" fill="#1f4a9c"/><rect x="9" y="21" width="24" height="24" rx="2" fill="#2a5cb8"/><text x="21" y="39" class="word-w">W</text></svg></div>
    <div class="app run"><svg viewBox="0 0 65 66"><rect width="65" height="66" rx="15" fill="#f0f0ee"/><rect x="6" y="10" width="53" height="50" rx="9" fill="#9bb8dc"/><rect x="6" y="34" width="53" height="26" fill="#5d8ab4"/><path d="M6 52l16-8 6 16H6z" fill="#4b4238"/><rect x="34" y="28" width="22" height="9" rx="2" fill="#1a1a1a"/><path d="M34 37h22l6 30H30z" fill="#d6d6d6" opacity=".9"/></svg></div>
    <div class="app run"><svg viewBox="0 0 65 66"><rect width="65" height="66" rx="15" fill="#f3f6fb"/><g transform="translate(32.500 33)" fill="none" stroke="#2b2f2f" stroke-width="4"><ellipse rx="12" ry="23"/><ellipse rx="12" ry="23" transform="rotate(60)"/><ellipse rx="12" ry="23" transform="rotate(120)"/></g></svg></div>
    <div class="dock-sep sep-b"></div>
    <div class="app app-doc"><svg viewBox="0 0 53 78"><path d="M4 3h32l6 0v72H0V3z" fill="#f2f2ee"/><rect x="2" y="0" width="44" height="6" fill="#d8d8d4"/><path d="M36 10l16 6v20l-12 4z" fill="#fafaf6"/><rect y="30" width="53" height="48" fill="#f4f4ef"/><path d="M5 12h26M5 17h26M5 22h26M5 27h22M5 36h40M5 41h40M5 46h30M5 54h14" stroke="#8a8a86" stroke-width="1.500"/><text x="26" y="74" class="pdf-label">PDF</text></svg></div>
    <div class="app app-mini"><svg viewBox="0 0 65 66"><use href="#a-chrome"/><path d="M0 28L26 0H12L0 14z" fill="#2f52b4"/></svg></div>
    <div class="app app-mini app-mini-b"><svg viewBox="0 0 65 66"><use href="#a-chrome"/><path d="M0 28L26 0H12L0 14z" fill="#2f52b4"/></svg></div>
    <div class="app app-trash"><svg viewBox="0 0 58 76"><path d="M2 14c8-5 46-5 54 0l-7 56c-2 6-38 6-40 0z" fill="url(#gTrash)"/><path d="M6 8l10-6 8 10 10-8 8 10 12-4v6c-10 4-38 4-48 0z" fill="#d2d2ce"/><path d="M14 10l12 3-4 5-8-3zM32 8l10 4-3 6-9-3z" fill="#42506a"/><path d="M26 11l6 2-3 4-4-2z" fill="#d8703a"/></svg></div>
  </footer>
</body>
</html>
```

FILE: styles.css
```css
* {
  box-sizing: border-box;
}

html, body {
  margin: 0;
  padding: 0;
  width: 3456px;
  height: 2234px;
  overflow: hidden;
  background-color: #000;
  font-family: Roboto, "Liberation Sans", sans-serif;
}

body {
  position: relative;
}

ul {
  list-style: none;
  margin: 0;
  padding: 0;
}

h2, h3, h4, p {
  margin: 0;
}

.sprite {
  position: absolute;
  width: 0;
  height: 0;
}

.line-icon {
  fill: none;
  stroke: currentColor;
  stroke-width: 2;
  stroke-linecap: round;
  stroke-linejoin: round;
  flex: none;
}

/* desktop behind the window */
.wallpaper {
  position: absolute;
  left: 0;
  right: 0;
  bottom: 0;
  height: 125px;
  background:
    linear-gradient(180deg, #000 0, #000 104px, rgba(0,0,0,0) 110px),
    linear-gradient(90deg, #10160f 0, #2a3a22 12%, #141a12 26%, #3a3a26 38%, #2a2216 60%, #151b15 78%, #2a2a22 92%);
}

.doc-pane {
  position: absolute;
  left: 3181px;
  right: 0;
  top: 0;
  bottom: 0;
  color: #111;
  font-family: "Liberation Sans", sans-serif;
  font-weight: 700;
  font-size: 24px;
  white-space: nowrap;
  background: linear-gradient(180deg, #000 0, #1a1a10 12px, #5c5838 34px, #d8d08c 62px, #f5efa0 100%);
}

.doc-line-1 {
  position: absolute;
  top: 30px;
  left: 194px;
}

.doc-line-2 {
  position: absolute;
  top: 113px;
  left: 22px;
}

/* mac menu bar */
.menubar {
  position: relative;
  height: 74px;
  display: flex;
  align-items: center;
  padding: 0 32px 0 41px;
  margin-bottom: 2px;
  color: #f4f4f0;
  font-family: Inter, "Liberation Sans", sans-serif;
  font-size: 25.4px;
  font-weight: 500;
  background: linear-gradient(90deg, #52564a 0, #4b4d3b 40%, #485040 68%, #434a41 88%, #414a42 100%);
}

.apple {
  width: 27px;
  height: 32px;
  fill: #f4f4f0;
}

.menus {
  display: flex;
  gap: 40.5px;
  margin-left: 40px;
}

.menu-app {
  font-size: 26.4px;
  font-weight: 700;
}

.status {
  margin-left: auto;
  display: grid;
  grid-template-columns: 72px 72px 84px 72px 80px 92px 72px 56px 78px 54px 88px 64px 56px 92px 42px 84px auto;
  align-items: center;
  justify-items: center;
  width: 1420px;
}

.status svg {
  width: 40px;
  height: 40px;
}

.st-line {
  fill: none;
  stroke: #efefeb;
  stroke-width: 3;
}

.st-line.thin {
  stroke-width: 2;
}

.st-fill {
  fill: #efefeb;
}

.st-solid {
  fill: #efefeb;
  stroke: none;
}

.st-blue {
  fill: #4aa0e8;
  stroke: none;
}

.st-text {
  font-size: 21px;
  font-weight: 400;
  color: #e8e8e4;
}

.battery {
  display: block;
  width: 46px;
  height: 30px;
  padding: 3px;
  border: 2px solid #9a9c96;
  border-radius: 8px;
}

.battery-level {
  display: block;
  width: 52%;
  height: 100%;
  border-radius: 3px;
  background-color: #efefeb;
}

.st-clock {
  justify-self: start;
  margin-left: 4px;
  font-weight: 400;
  font-size: 26px;
  white-space: nowrap;
}

/* browser window */
.window {
  position: relative;
  height: 2037px;
  display: flex;
  flex-direction: column;
  overflow: hidden;
  border-radius: 22px;
  border-top: 2px solid #6a6a6c;
  background-color: #1c1b22;
  font-family: Inter, "Liberation Sans", sans-serif;
}

.tabstrip {
  height: 86px;
  flex: none;
  display: flex;
  align-items: center;
  gap: 9px;
  color: #fbfbfe;
  font-size: 22.2px;
  background-color: #1c1b22;
}

.tab-controls {
  width: 297px;
  height: 100%;
  display: flex;
  align-items: center;
  gap: 16px;
  padding-left: 26px;
  border-right: 1px solid #4a4a50;
}

.light {
  width: 24px;
  height: 24px;
  border-radius: 50%;
}

.light-red { background-color: #ee6a5f; }
.light-yellow { background-color: #f5bf4f; }
.light-green { background-color: #61c554; }

.firefox-view {
  width: 32px;
  height: 44px;
  margin-left: 89px;
  color: #fbfbfe;
}

.tab {
  width: 441px;
  height: 72px;
  flex: none;
  display: flex;
  align-items: center;
  padding: 0 16px;
  color: #c7c6ca;
  white-space: nowrap;
  border-radius: 8px;
  margin-top: 1px;
}

.tab-fav {
  padding-left: 22px;
}

.tab-fav-b {
  padding-left: 20px;
}

.tab-active {
  background-color: #52515a;
  color: #fbfbfe;
  box-shadow: 0 1px 3px rgba(0,0,0,.4);
}

.favicon {
  width: 24px;
  height: 32px;
  flex: none;
  margin-right: 14px;
}

.tab-x {
  width: 20px;
  height: 20px;
  margin-left: auto;
  margin-right: 4px;
  color: #fbfbfe;
}

.tab-plus {
  width: 26px;
  height: 26px;
  margin-left: 23px;
}

.tab-chevron {
  width: 26px;
  height: 26px;
  margin-left: 259px;
}

.navbar {
  height: 72px;
  flex: none;
  display: flex;
  align-items: center;
  padding: 8px 31px 0 33px;
  color: #fbfbfe;
  background-color: #2b2a33;
}

.nav-btn {
  width: 32px;
  height: 32px;
  margin-right: 40px;
}

.nav-dim {
  color: #77767c;
}

.urlbar {
  width: 2387px;
  height: 64px;
  margin-left: 213px;
  display: flex;
  align-items: center;
  padding: 0 16px;
  border-radius: 8px;
  background-color: #1c1b22;
}

.url-shield {
  width: 32px;
  height: 36px;
}

.url-lock {
  width: 28px;
  height: 36px;
  margin-left: 25px;
}

.url-text {
  margin-left: 23px;
  padding-top: 2px;
  font-size: 27px;
  white-space: nowrap;
}

.url-star {
  width: 34px;
  height: 34px;
  margin-left: auto;
}

.nav-tools {
  display: flex;
  align-items: center;
  padding-left: 255px;
  gap: 40px;
}

.nav-tools .nav-btn {
  margin-right: 0;
}

.account {
  position: relative;
  display: flex;
}

.account-dot {
  position: absolute;
  top: -6px;
  right: -5px;
  width: 14px;
  height: 14px;
  border-radius: 50%;
  background-color: #3f9ff0;
}

.bookmarks {
  height: 64px;
  flex: none;
  display: flex;
  align-items: center;
  gap: 24px;
  padding: 9px 25px 0 24px;
  color: #fbfbfe;
  font-size: 22px;
  background-color: #2b2a33;
}

.bm {
  display: flex;
  align-items: center;
  gap: 8px;
  white-space: nowrap;
}

.bm-trunc {
  margin-right: 12px;
}

.bm-trunc-s {
  margin-right: 5px;
}

.bm-icon {
  width: 32px;
  height: 32px;
  flex: none;
}

.bm-slim {
  width: 20px;
  margin-right: 8px;
}

.bm-more {
  width: 28px;
  height: 32px;
  margin-left: auto;
}

.banner {
  height: 90px;
  flex: none;
  position: relative;
  z-index: 2;
  display: flex;
  align-items: center;
  justify-content: space-between;
  padding: 5px 50px 0 33px;
  color: #e8eef8;
  font-size: 27.4px;
  background-color: #183f7e;
  border-bottom: 3px solid #1e4c92;
  box-shadow: 0 6px 18px rgba(30,50,90,.16);
}

.banner a {
  color: #fff;
}

.banner-x {
  width: 20px;
  height: 20px;
  color: #a9c0e2;
}

/* app content */
.content {
  flex: 1;
  min-height: 0;
  display: grid;
  grid-template-columns: 576px 1fr;
  overflow: hidden;
  background: linear-gradient(180deg, #f9fafb 0, #f9fafb calc(100% - 50px), #e3e4e7 100%);
  font-family: Roboto, "Liberation Sans", sans-serif;
}

.sidebar {
  align-self: start;
  height: 809px;
  color: #475569;
  background-color: #fff;
  border-right: 2px solid #e5e7eb;
}

.subnav {
  margin: -36px 36px 0 108px;
  display: flex;
  flex-direction: column;
  gap: 5px;
  font-size: 31.5px;
}

.subnav li {
  height: 84px;
  display: flex;
  align-items: center;
  gap: 28px;
  padding-left: 28px;
  border: 2px solid transparent;
  border-radius: 18px;
}

.subnav li.active {
  margin: 2px 0 5px;
  color: #1d4ed8;
  background-color: #eff6ff;
  border-color: #bfdbfe;
}

.nav-icon {
  width: 35px;
  height: 35px;
  margin-left: -2px;
}

.mainnav {
  margin-top: 7px;
  font-size: 36px;
  padding-bottom: 27px;
  border-bottom: 2px solid #e5e7eb;
}

.mainnav li {
  height: 112px;
  display: flex;
  align-items: center;
  gap: 28px;
  padding-left: 63px;
}

.nav-icon-lg {
  width: 44px;
  height: 44px;
}

.welcome {
  padding: 36px 35px 0;
  font-size: 32px;
  line-height: 44px;
}

.panel {
  align-self: start;
  margin: 0 108px 0 109px;
  padding: 16px 56px 56px 55px;
  border-radius: 0 0 20px 20px;
  background: linear-gradient(135deg, #eff6ff, #e0e7fd);
}

.stats {
  display: grid;
  grid-template-columns: repeat(4, 1fr);
  gap: 58px;
  height: 315px;
}

.stat {
  padding: 56px 54px 0;
  color: #fff;
  border-radius: 16px;
  box-shadow: 0 3px 8px rgba(40,50,90,.14);
}

.stat-blue { background: linear-gradient(90deg, #4f80ec, #3a63e3); }
.stat-green { background: linear-gradient(90deg, #5fc06a, #4a9d55); }
.stat-purple { background: linear-gradient(90deg, #a05cf0, #8838dc); }
.stat-orange { background: linear-gradient(90deg, #e87e36, #da622a); }

.stat h3 {
  display: flex;
  align-items: center;
  gap: 18px;
  font-size: 40.5px;
  font-weight: 500;
  line-height: 60px;
  letter-spacing: -1px;
  white-space: nowrap;
}

.stat-icon {
  width: 44px;
  height: 44px;
}

.stat-num {
  margin-top: 25px;
  font-size: 68px;
  font-weight: 700;
  line-height: 70px;
  letter-spacing: -.2px;
}

.stat p {
  margin-top: 8px;
  font-size: 31.5px;
  line-height: 40px;
  white-space: nowrap;
  color: rgba(255,255,255,.85);
}

.tabs {
  display: grid;
  grid-template-columns: repeat(3, 1fr);
  height: 90px;
  margin-top: 74px;
  padding: 9px;
  border-radius: 14px;
  background-color: #d0d0d0;
}

.tabs-btn {
  display: flex;
  align-items: center;
  justify-content: center;
  gap: 20px;
  padding: 0;
  border: 0;
  border-radius: 10px;
  font-family: Roboto, "Liberation Sans", sans-serif;
  font-size: 31.5px;
  font-weight: 500;
  color: #645e5a;
  background: none;
}

.tabs-on {
  background-color: #fff;
  box-shadow: 0 2px 4px rgba(0,0,0,.1);
}

.tabs-icon {
  width: 35px;
  height: 35px;
}

.columns {
  display: grid;
  grid-template-columns: 1fr 1fr;
  gap: 58px;
  height: 1010px;
  margin-top: 56px;
}

.card {
  padding: 46px 54px 0;
  border-radius: 16px;
  background-color: #fff;
  box-shadow: 0 2px 8px rgba(40,50,90,.1);
}

.card h2 {
  display: flex;
  align-items: center;
  gap: 18px;
  height: 70px;
  font-size: 54px;
  font-weight: 700;
  letter-spacing: -1.35px;
  color: #645e5a;
}

.card-sub {
  margin-top: 7px;
  font-size: 31.5px;
  line-height: 44px;
  color: #6e6864;
}

.goals {
  display: flex;
  flex-direction: column;
  gap: 58px;
  margin-top: 58px;
}

.goal-head {
  display: flex;
  justify-content: space-between;
  font-size: 36px;
  line-height: 50px;
  color: #4b5563;
}

.goal-head b {
  font-weight: 700;
  color: #57534e;
}

.bar {
  height: 27px;
  margin-top: 22px;
  overflow: hidden;
  border-radius: 14px;
  background-color: #e99a52;
}

.bar-fill {
  height: 100%;
  background-color: #3a84b7;
}

.goal small {
  display: block;
  margin-top: 9px;
  font-size: 27px;
  line-height: 36px;
  color: #6b7280;
}

.highlights {
  display: flex;
  flex-direction: column;
  gap: 36px;
  margin-top: 54px;
}

.hl {
  height: 157px;
  display: flex;
  align-items: flex-start;
  gap: 28px;
  padding: 34px 26px 0;
  border-radius: 16px;
}

.hl h4 {
  font-size: 36px;
  font-weight: 500;
  line-height: 44px;
}

.hl p {
  margin-top: 7px;
  font-size: 31.5px;
  line-height: 44px;
}

.hl-icon {
  width: 44px;
  height: 44px;
  margin-top: 3px;
}

.hl-green { background-color: #f0fdf4; }
.hl-green .hl-icon { color: #47a155; }
.hl-green h4 { color: #1f5a33; }
.hl-green p { color: #2f8042; }

.hl-blue { background-color: #eff6ff; }
.hl-blue .hl-icon { color: #3b66e6; }
.hl-blue h4 { color: #1e3a8a; }
.hl-blue p { color: #1d4ed8; }

.hl-purple { background-color: #faf5ff; }
.hl-purple .hl-icon { color: #9040e8; }
.hl-purple h4 { color: #581c87; }
.hl-purple p { color: #7e22ce; }

.hl-orange { background-color: #fff7ed; }
.hl-orange .hl-icon { color: #e06a2c; }
.hl-orange h4 { color: #7c2d12; }
.hl-orange p { color: #c2410c; }

/* dock */
.dock {
  position: absolute;
  left: 70px;
  top: 2120px;
  width: 3317px;
  height: 103px;
  display: flex;
  gap: 20px;
  padding: 14px 0 0 13px;
  border: 2px solid rgba(255,255,255,.12);
  border-radius: 30px;
  background: linear-gradient(90deg, #5d6157 0, #676a5e 35%, #5f5a55 58%, #5f5a55 65%, #626a62 85%, #7c7868 90%, #a8a477 96%, #bdb985 100%);
}

.app {
  position: relative;
  width: 65px;
  height: 66px;
  flex: none;
}

.app svg {
  display: block;
  width: 100%;
  height: 100%;
  overflow: visible;
}

.run::after {
  content: "";
  position: absolute;
  left: 30px;
  bottom: -17px;
  width: 5px;
  height: 6px;
  border-radius: 50%;
  background-color: #000;
}

.badge {
  position: absolute;
  top: -9px;
  right: -10px;
  min-width: 26px;
  height: 32px;
  padding: 0 7px;
  border-radius: 16px;
  color: #fff;
  font-family: Inter, "Liberation Sans", sans-serif;
  font-size: 17px;
  line-height: 32px;
  text-align: center;
  background-color: #e14c3c;
}

.badge-wide {
  top: -10px;
  right: -7px;
  height: 32px;
  min-width: 50px;
  padding: 0 1px;
  font-size: 14px;
}

.badge-small {
  right: -9px;
}

.dock-sep {
  width: 2px;
  height: 76px;
  margin-top: -1px;
  background-color: #3a3a36;
}

.sep-a {
  margin-left: 11px;
  margin-right: 5px;
}

.sep-b {
  margin-left: 13px;
  margin-right: 11px;
}

.app-photos {
  width: 74px;
  height: 76px;
  margin: -5px -5px 0 -5px;
}

.app-doc {
  width: 53px;
  height: 78px;
  margin-top: -7px;
}

.app-mini {
  width: 24px;
  height: 24px;
  margin: 45px 0 0 52px;
}

.app-mini-b {
  margin-left: 40px;
}

.app-trash {
  width: 58px;
  height: 76px;
  margin: -6px 0 0 1px;
}

.cal-mon {
  font-family: "Liberation Sans", sans-serif;
  font-size: 14px;
  font-weight: 700;
  fill: #fff;
  text-anchor: middle;
}

.cal-day {
  font-family: "Liberation Sans", sans-serif;
  font-size: 40px;
  fill: #2c2c2c;
  text-anchor: middle;
}

.tv-label {
  font-family: "Liberation Sans", sans-serif;
  font-size: 25px;
  fill: #f4f4f4;
  text-anchor: middle;
}

.beta {
  font-family: "Liberation Sans", sans-serif;
  font-size: 11px;
  font-weight: 700;
  fill: #fff;
}

.word-w {
  font-family: "Liberation Sans", sans-serif;
  font-size: 20px;
  font-weight: 700;
  fill: #fff;
  text-anchor: middle;
}

.pdf-label {
  font-family: "Liberation Sans", sans-serif;
  font-size: 14px;
  fill: #6a6a66;
  text-anchor: middle;
}
```
